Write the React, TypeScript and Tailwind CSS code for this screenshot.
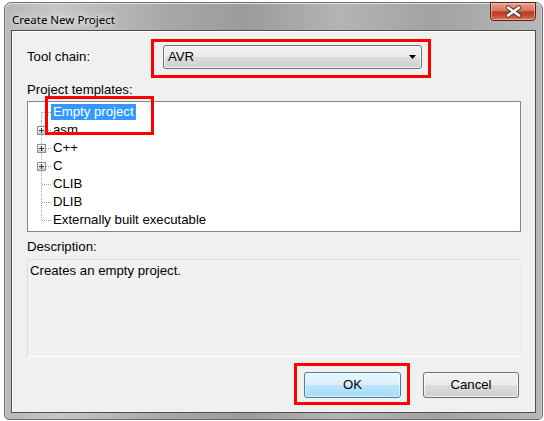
import React from 'react'

type Item = { label: string; expandable?: boolean; selected?: boolean }

const items: Item[] = [
  { label: 'Empty project', selected: true },
  { label: 'asm', expandable: true },
  { label: 'C++', expandable: true },
  { label: 'C', expandable: true },
  { label: 'CLIB' },
  { label: 'DLIB' },
  { label: 'Externally built executable' },
]

function TreeGutter({ first, last, expandable }: { first: boolean; last: boolean; expandable?: boolean }) {
  // connector lines + optional [+] box, 23px wide like the classic treeview
  const y1 = first ? 9 : 0
  const y2 = last ? 9 : 18
  return (
    <svg width="23" height="18" viewBox="0 0 23 18" shapeRendering="crispEdges" className="shrink-0">
      <line x1="13.5" y1={y1} x2="13.5" y2={y2} stroke="#a0a0a0" strokeDasharray="1 1" />
      <line x1={expandable ? 18 : 14} y1="9.5" x2="23" y2="9.5" stroke="#a0a0a0" strokeDasharray="1 1" />
      {expandable && (
        <g>
          <defs>
            <linearGradient id="expg" x1="0" y1="0" x2="0" y2="1">
              <stop offset="0" stopColor="#ffffff" />
              <stop offset="1" stopColor="#c6c6c6" />
            </linearGradient>
          </defs>
          <rect x="9.5" y="5.5" width="8" height="8" fill="url(#expg)" stroke="#919191" />
          <line x1="11" y1="9.5" x2="16" y2="9.5" stroke="#1c3b6c" />
          <line x1="13.5" y1="7" x2="13.5" y2="12" stroke="#1c3b6c" />
        </g>
      )}
    </svg>
  )
}

export default function App() {
  return (
    <div
      className="relative w-[544px] h-[421px] overflow-hidden bg-white text-black"
      style={{ fontFamily: '"Liberation Sans", Arial, sans-serif' }}
    >
      {/* Window frame */}
      <div className="relative ml-[4px] mt-[2px] w-[539px] h-[418px] flex flex-col rounded-t-[7px] rounded-b-[5px] border border-[#6b6b6b] bg-[linear-gradient(90deg,#b8b8b8_0%,#c6c6c6_10%,#a8a8a8_30%,#9b9b9b_45%,#b4b4b4_62%,#a2a2a2_80%,#b8b8b8_100%)] px-[6px] pb-[6px] shadow-[inset_0_1px_0_#e6e6e6,inset_1px_0_0_#d0d0d0,inset_-1px_0_0_#d0d0d0]">
        {/* Title bar */}
        <div className="h-[27px] shrink-0 pl-[1px] pt-[4px]">
          <span
            className="text-[11.5px] leading-[16px] text-black"
            style={{ fontFamily: '"Noto Sans", "Open Sans", sans-serif', textShadow: '0 0 6px #f4f4f4, 0 0 10px #e8e8e8' }}
          >
            Create New Project
          </span>
        </div>

        {/* Close button */}
        <div className="absolute top-[-1px] right-[6px] w-[46px] h-[19px] rounded-b-[4px] border border-[#5b2219] bg-[linear-gradient(180deg,#e9a594_0%,#d8725c_45%,#bb3b22_52%,#c44a30_75%,#dc7c60_100%)] shadow-[inset_0_0_0_1px_rgba(255,210,200,0.55)] flex items-center justify-center">
          <svg width="17" height="13" viewBox="0 0 17 13">
            <path d="M3 2.5 L14 10.5 M14 2.5 L3 10.5" stroke="#3a3a3a" strokeWidth="4.4" strokeLinecap="round" />
            <path d="M3 2.5 L14 10.5 M14 2.5 L3 10.5" stroke="#ffffff" strokeWidth="2.6" strokeLinecap="round" />
          </svg>
        </div>

        {/* Client area */}
        <div className="flex-1 flex flex-col border border-[#4f4f4f] bg-[#f0f0f0] pl-[15px] pr-[14px] shadow-[inset_1px_1px_0_#ffffff]">
          {/* Tool chain */}
          <div className="mt-[14px] h-[24px] flex items-center text-[13.2px]">
            <span className="w-[136px]">Tool chain:</span>
            <div className="relative w-[259px] h-[24px] rounded-[3px] border border-[#707070] bg-[linear-gradient(180deg,#f2f2f2_0%,#ebebeb_50%,#dddddd_50%,#cfcfcf_100%)] shadow-[inset_0_0_0_1px_rgba(255,255,255,0.7)] flex items-center pl-[4px]">
              <span>AVR</span>
              <svg className="absolute right-[5px] top-[9px]" width="7" height="4" viewBox="0 0 7 4">
                <path d="M0 0 H7 L3.5 4 Z" fill="#000" />
              </svg>
            </div>
          </div>

          {/* Templates */}
          <div className="mt-[13px] h-[16px] leading-[16px] text-[13.2px]">Project templates:</div>
          <div className="mt-[3px] h-[131px] border border-[#828790] bg-white pt-[1px] text-[13.2px]">
            {items.map((it, i) => (
              <div key={it.label} className="h-[18px] flex items-center">
                <TreeGutter first={i === 0} last={i === items.length - 1} expandable={it.expandable} />
                <span
                  className={
                    it.selected
                      ? 'h-[16px] leading-[16px] px-[2px] bg-[#3399ff] text-white'
                      : 'h-[16px] leading-[16px] px-[2px]'
                  }
                >
                  {it.label}
                </span>
              </div>
            ))}
          </div>

          {/* Description */}
          <div className="mt-[7px] h-[16px] leading-[16px] text-[13.2px]">Description:</div>
          <div className="mt-[4px] h-[98px] border border-[#dedede] border-r-[#e8eaee] border-b-[#ffffff] bg-[#f1f1f1] px-[2px] pt-[3px] text-[13.2px] leading-[16px]">
            Creates an empty project.
          </div>

          {/* Buttons */}
          <div className="mt-[15px] mr-[2px] flex justify-end gap-[22px] text-[13.2px]">
            <button className="w-[97px] h-[26px] rounded-[3px] border border-[#3c7fb1] bg-[linear-gradient(180deg,#eaf6fd_0%,#d9f0fc_50%,#bee6fd_50%,#a7d9f5_100%)] shadow-[inset_0_0_0_1px_rgba(255,255,255,0.6)]">
              OK
            </button>
            <button className="w-[96px] h-[26px] rounded-[3px] border border-[#707070] bg-[linear-gradient(180deg,#f2f2f2_0%,#ebebeb_50%,#dddddd_50%,#cfcfcf_100%)] shadow-[inset_0_0_0_1px_rgba(255,255,255,0.7)]">
              Cancel
            </button>
          </div>
        </div>
      </div>

      {/* Red annotation boxes */}
      <div className="absolute left-[151px] top-[39px] w-[280px] h-[39px] border-[3px] border-[#ff0000]" />
      <div className="absolute left-[45px] top-[96px] w-[109px] h-[39px] border-[3px] border-[#ff0000]" />
      <div className="absolute left-[294px] top-[363px] w-[116px] h-[42px] border-[3px] border-[#ff0000]" />
    </div>
  )
}
